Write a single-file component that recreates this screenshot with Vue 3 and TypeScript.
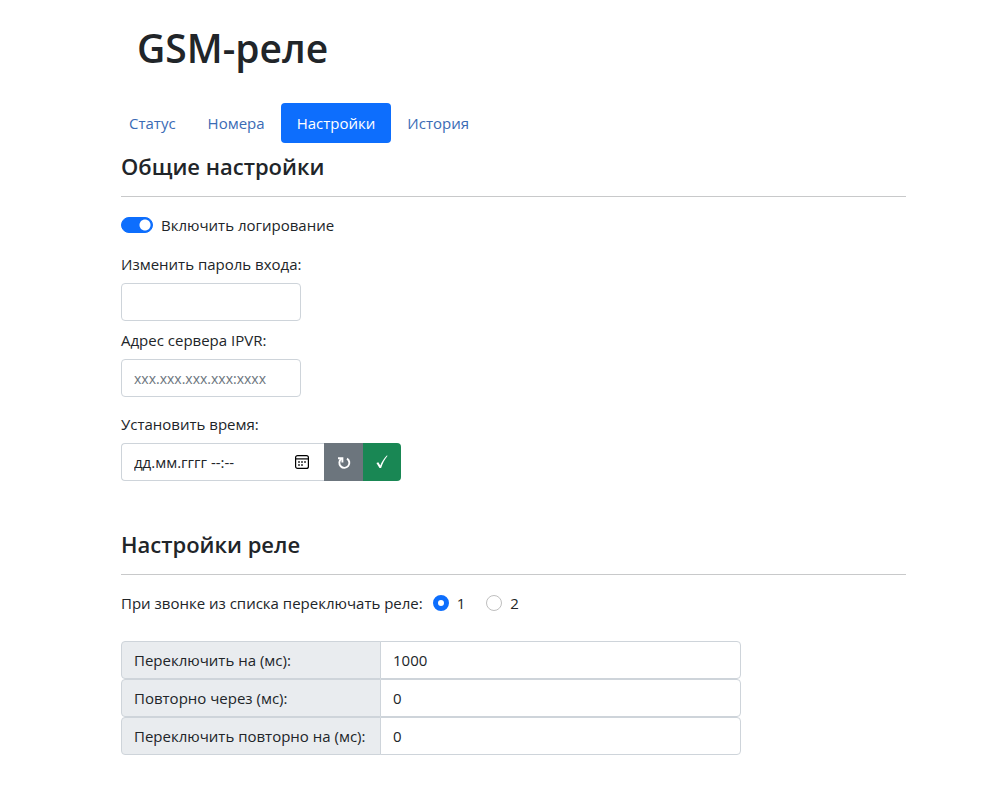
<script setup lang="ts">
import { ref } from 'vue'

interface Tab { id: string; title: string }
interface Timing { id: string; title: string; value: string }

const tabs: Tab[] = [
  { id: 'status', title: 'Статус' },
  { id: 'numbers', title: 'Номера' },
  { id: 'settings', title: 'Настройки' },
  { id: 'history', title: 'История' },
]
const activeTab = ref('settings')
const logging = ref(true)
const password = ref('')
const server = ref('')
const time = ref('')
const relay = ref('1')
const timings = ref<Timing[]>([
  { id: 'switch', title: 'Переключить на (мс):', value: '1000' },
  { id: 'delay', title: 'Повторно через (мс):', value: '0' },
  { id: 'repeat', title: 'Переключить повторно на (мс):', value: '0' },
])
</script>

<template>
  <main class="page">
    <h1>GSM-реле</h1>
    <nav class="tabs">
      <a
        v-for="tab in tabs"
        :key="tab.id"
        :href="'#' + tab.id"
        :class="['tab', { active: tab.id === activeTab }]"
        @click.prevent="activeTab = tab.id"
      >{{ tab.title }}</a>
    </nav>

    <section>
      <h2>Общие настройки</h2>
      <div class="check">
        <input id="logging" v-model="logging" type="checkbox" role="switch" class="switch">
        <label for="logging">Включить логирование</label>
      </div>
      <div class="field">
        <label for="password">Изменить пароль входа:</label>
        <input id="password" v-model="password" type="password" class="control">
      </div>
      <div class="field spaced">
        <label for="server">Адрес сервера IPVR:</label>
        <input id="server" v-model="server" type="text" class="control" placeholder="xxx.xxx.xxx.xxx:xxxx">
      </div>
      <div class="field">
        <label for="time">Установить время:</label>
        <div class="time-group">
          <div class="time-box">
            <input id="time" v-model="time" type="text" placeholder="дд.мм.гггг --:--">
            <button type="button" class="calendar" aria-label="Календарь">
              <svg width="16" height="16" viewBox="0 0 16 16" fill="none" stroke="#000">
                <rect x="1.6" y="1.6" width="12.8" height="12.8" rx="2" stroke-width="1.2" />
                <path d="M1.6 4.9h12.8" stroke-width="1.2" />
                <path d="M4.2 8h1.6M7.2 8h1.6M10.2 8h1.6M4.2 11h1.6M7.2 11h1.6" stroke-width="1.7" />
              </svg>
            </button>
          </div>
          <button type="button" class="action refresh" aria-label="Обновить">
            <svg width="16" height="16" viewBox="0 0 16 16" fill="none" stroke="#fff" stroke-width="1.9">
              <path d="M2 4.2h4.4v4.4" />
              <path d="M5.4 4.8A5 5 0 1 0 11 4.6" />
            </svg>
          </button>
          <button type="button" class="action apply" aria-label="Применить">
            <svg width="16" height="16" viewBox="0 0 16 16" fill="#fff">
              <path d="M2.4 9.1 4.3 8.2 6.3 11.4C7.8 7.6 10 4.2 12.8 1.4L13.6 1.8C10.8 5.2 8.7 9.2 7.1 14H5.5Z" />
            </svg>
          </button>
        </div>
      </div>
    </section>

    <section class="relay">
      <h2>Настройки реле</h2>
      <div class="radios" role="radiogroup" aria-labelledby="relay-title">
        <span id="relay-title">При звонке из списка переключать реле:</span>
        <label v-for="n in ['1', '2']" :key="n" class="radio">
          <input v-model="relay" type="radio" name="relay" :value="n">{{ n }}
        </label>
      </div>
      <div class="timings">
        <div v-for="item in timings" :key="item.id" class="timing">
          <label :for="item.id">{{ item.title }}</label>
          <input :id="item.id" v-model="item.value" type="text" inputmode="numeric">
        </div>
      </div>
    </section>
  </main>
</template>

<style>
body {
  margin: 0;
  background: #fff;
}
</style>

<style scoped>
.page,
.page * {
  box-sizing: border-box;
}

.page {
  margin: 0 94px 0 121px;
  padding: 24px 0 44px;
  color: #212529;
  font: 15px/24px "Open Sans", "Noto Sans", sans-serif;
}

input,
button {
  margin: 0;
  color: inherit;
  font: inherit;
}

input::placeholder {
  color: #6c757d;
  opacity: 1;
}

h1 {
  margin: 0 0 31px;
  padding-left: 16px;
  font-size: 39px;
  font-weight: 600;
  line-height: 48px;
}

.tabs {
  display: flex;
  margin: 0 -8px 8px;
}

.tab {
  padding: 8px 16px;
  border-radius: 4px;
  color: #3a6bb5;
  text-decoration: none;
}

.tab.active {
  background: #0d6efd;
  color: #fff;
}

h2 {
  margin: 0 0 16px;
  padding-bottom: 15px;
  border-bottom: 1px solid #c8c9ca;
  font-size: 22px;
  font-weight: 600;
  line-height: 30px;
}

.check {
  display: flex;
  align-items: center;
  gap: 8px;
  margin-bottom: 15px;
}

.switch {
  appearance: none;
  width: 32px;
  height: 16px;
  border: 1px solid #bfbfbf;
  border-radius: 8px;
  background: radial-gradient(circle at 8px 50%, #bfbfbf 5px, transparent 6px) #fff;
}

.switch:checked {
  border-color: #0d6efd;
  background: radial-gradient(circle at 23px 50%, #fff 5px, transparent 6px) #0d6efd;
}

.field {
  display: flex;
  flex-direction: column;
  align-items: flex-start;
  gap: 7px;
  margin-bottom: 7px;
}

.field.spaced {
  margin-bottom: 15px;
}

.control {
  width: 180px;
  height: 38px;
  padding: 6px 12px;
  border: 1px solid #ced4da;
  border-radius: 4px;
  background: #fff;
}

.control::placeholder {
  font-size: 14px;
}

.time-group {
  display: flex;
  width: 280px;
  height: 38px;
}

.time-box {
  display: flex;
  flex: 1;
  align-items: center;
  min-width: 0;
  padding: 0 14px 0 12px;
  border: 1px solid #ced4da;
  border-right: 0;
  border-radius: 4px 0 0 4px;
}

.time-box input {
  flex: 1;
  min-width: 0;
  padding: 0;
  border: 0;
  background: none;
}

.time-box input::placeholder {
  color: #212529;
}

.calendar {
  display: flex;
  padding: 0;
  border: 0;
  background: none;
}

.action {
  display: flex;
  align-items: center;
  justify-content: center;
  width: 39px;
  padding: 0;
  border: 0;
}

.refresh {
  background: #6c757d;
}

.apply {
  width: 38px;
  border-radius: 0 4px 4px 0;
  background: #198754;
}

.relay {
  margin-top: 48px;
}

.radios {
  display: flex;
  align-items: center;
  gap: 10px;
}

.radio {
  display: flex;
  align-items: center;
  gap: 8px;
  margin-right: 11px;
}

.radio input {
  appearance: none;
  width: 16px;
  height: 16px;
  border: 1px solid #bfbfbf;
  border-radius: 50%;
  background: #fff;
}

.radio input:checked {
  border: 5px solid #0d6efd;
}

.timings {
  display: grid;
  grid-template-columns: 260px 1fr;
  width: 79%;
  margin-top: 26px;
}

.timing {
  display: contents;
}

.timing label {
  padding: 6px 12px;
  border: 1px solid #ced4da;
  border-radius: 4px 0 0 4px;
  background: #e9ecef;
  white-space: nowrap;
}

.timing input {
  min-width: 0;
  height: 38px;
  margin-left: -1px;
  padding: 6px 12px;
  border: 1px solid #ced4da;
  border-radius: 0 4px 4px 0;
  background: #fff;
}
</style>
